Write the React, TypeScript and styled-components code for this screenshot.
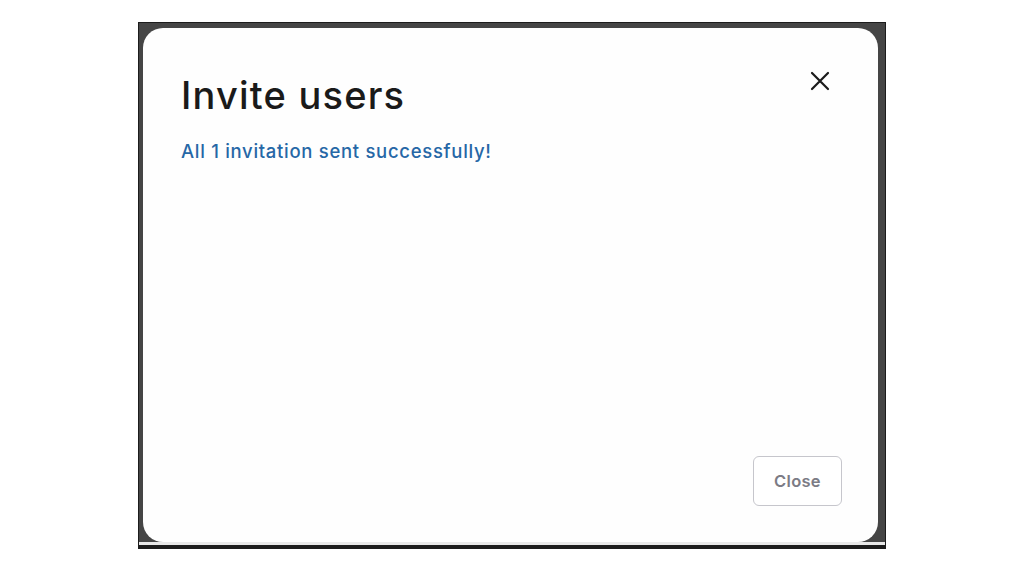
import styled, { createGlobalStyle } from "styled-components";

const GlobalStyle = createGlobalStyle`
	html, body {
		margin: 0;
		padding: 0;
		background: #ffffff;
	}
	#root {
		height: 576px;
	}
`

const Page = styled.div`
	height: 576px;
	display: flex;
	justify-content: center;
	align-items: flex-start;
	padding-top: 22px;
	box-sizing: border-box;
	font-family: "Inter", "Noto Sans", sans-serif;
`

const Backdrop = styled.div`
	width: 748px;
	height: 527px;
	box-sizing: border-box;
	display: flex;
	padding: 5px 7px 3px 4px;
	background-color: #454545;
	border: 1px solid #1c1c1c;
	border-bottom: 4px solid #1c1c1c;
	box-shadow: inset 0 -3px 0 #e8e8e8;
`

const Dialog = styled.div`
	flex: 1;
	display: flex;
	flex-direction: column;
	background-color: #fefefe;
	border-radius: 20px;
	padding: 43px 36px 36px 38px;
	box-sizing: border-box;
`

const Header = styled.div`
	display: flex;
	justify-content: space-between;
	align-items: flex-start;
`

const Title = styled.h1`
	margin: 0;
	font-size: 38px;
	line-height: 48px;
	font-weight: 500;
	letter-spacing: 1.2px;
	color: #1a1a1a;
`

const CloseIcon = styled.button`
	border: none;
	background: none;
	padding: 0;
	margin-right: 12px;
	width: 20px;
	height: 20px;
	display: flex;
	cursor: pointer;
`

const Message = styled.p`
	margin: 19px 0 0 0;
	font-size: 18.5px;
	line-height: 26px;
	font-weight: 500;
	letter-spacing: 0.7px;
	color: #2667a6;
`

const Footer = styled.div`
	margin-top: auto;
	display: flex;
	justify-content: flex-end;
`

const Button = styled.button`
	width: 89px;
	height: 50px;
	box-sizing: border-box;
	border: 1.5px solid #c6c6cc;
	border-radius: 6px;
	background: #ffffff;
	font-family: "Inter", "Noto Sans", sans-serif;
	font-size: 16.5px;
	font-weight: 600;
	letter-spacing: 0.3px;
	color: #7c7c85;
	cursor: pointer;
`

export default function App()
{
	return (
		<>
			<GlobalStyle />
			<Page>
				<Backdrop>
					<Dialog>
						<Header>
							<Title>Invite users</Title>
							<CloseIcon aria-label="Close">
								<svg width="20" height="20" viewBox="0 0 20 20">
									<path d="M2 2 L18 18 M18 2 L2 18" stroke="#1a1a1a" strokeWidth="2.2" strokeLinecap="round" />
								</svg>
							</CloseIcon>
						</Header>
						<Message>All 1 invitation sent successfully!</Message>
						<Footer>
							<Button>Close</Button>
						</Footer>
					</Dialog>
				</Backdrop>
			</Page>
		</>
	)
}
